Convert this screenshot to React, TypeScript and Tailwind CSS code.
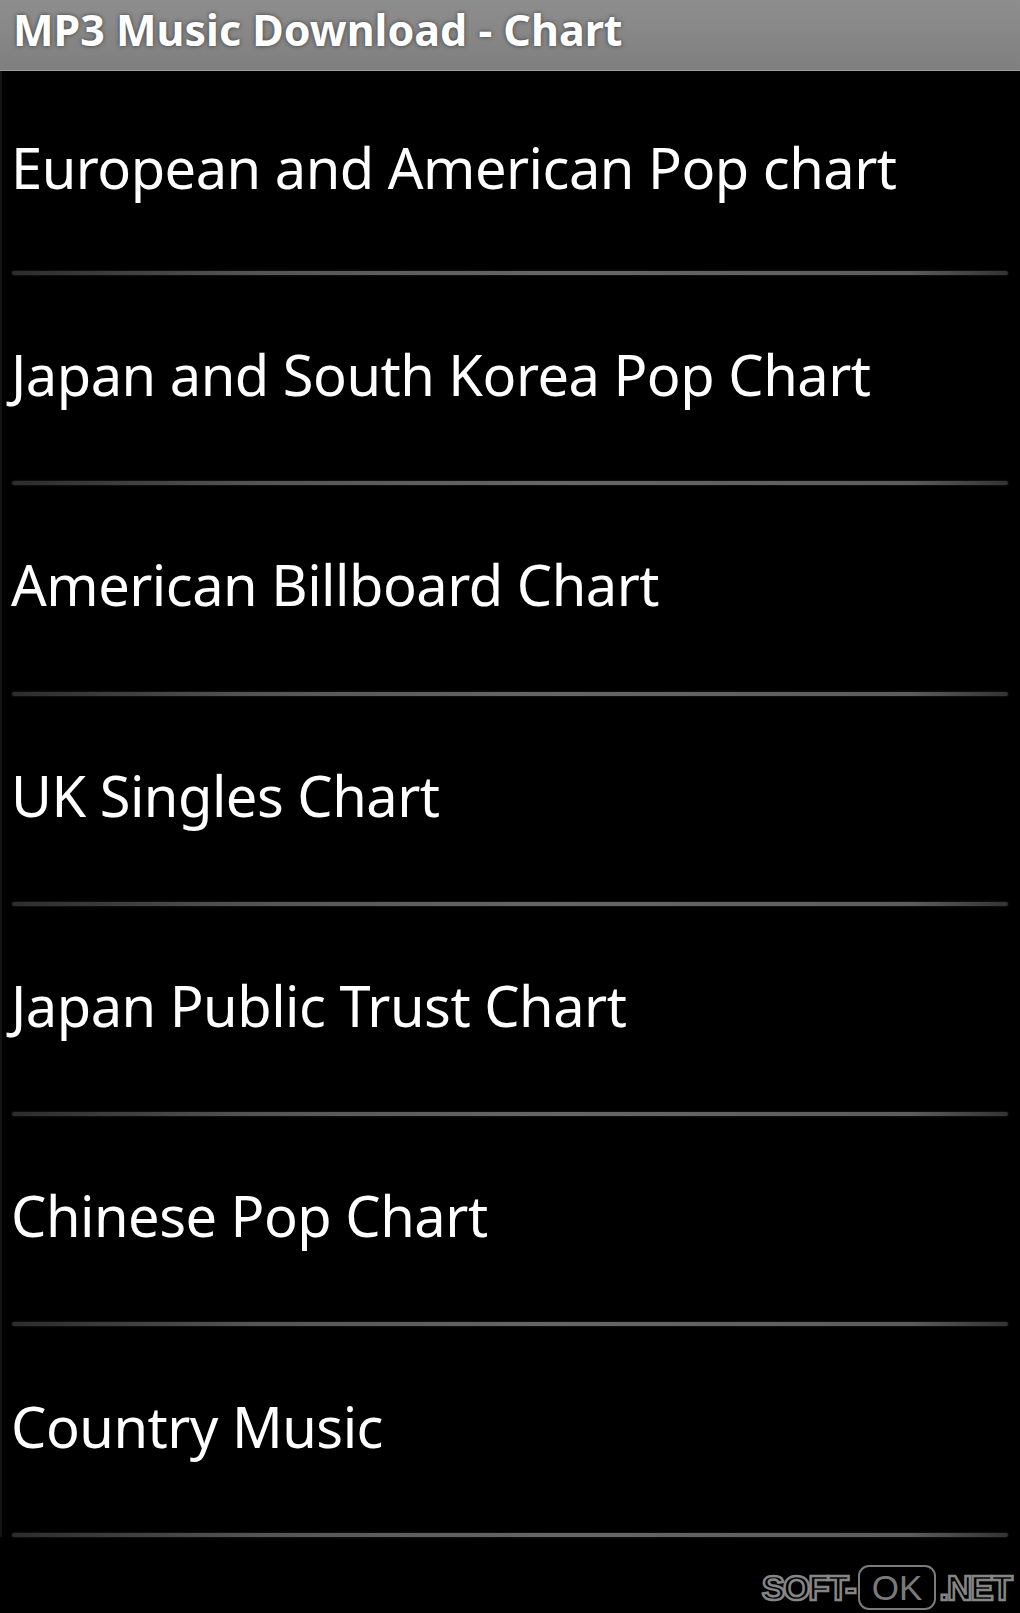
const charts = [
  "European and American Pop chart",
  "Japan and South Korea Pop Chart",
  "American Billboard Chart",
  "UK Singles Chart",
  "Japan Public Trust Chart",
  "Chinese Pop Chart",
  "Country Music",
];

function Divider() {
  return (
    <div className="h-[4px] ml-[10px] mr-[12px] rounded-full bg-[linear-gradient(to_right,#2c2c2c,#555555_25%,#666666_55%,#5c5c5c_90%,#333333)] shadow-[0_0_2px_rgba(90,90,90,0.6)]" />
  );
}

function Watermark() {
  return (
    <div className="absolute right-[9px] bottom-[3px] flex items-center font-['Liberation_Sans',Arial,sans-serif] text-[35px] font-bold leading-none tracking-[-2px]">
      <span className="text-black [-webkit-text-stroke:2.5px_#858585]">SOFT-</span>
      <span className="mx-[3px] px-[12px] h-[45px] flex items-center rounded-[11px] border-2 border-[#7a7a7a] font-normal text-[#7a7a7a] tracking-normal">
        OK
      </span>
      <span className="text-black [-webkit-text-stroke:2.5px_#858585]">.NET</span>
    </div>
  );
}

export default function App() {
  return (
    <div className="relative w-[1020px] h-[1613px] bg-black overflow-hidden font-['Noto_Sans','Open_Sans',sans-serif]">
      <header className="h-[71px] bg-gradient-to-b from-[#8e8e8e] to-[#7f7f7f] border-b border-[#9c9c9c] pl-[13px] pt-[8px]">
        <h1 className="text-[43px] font-bold leading-none text-white [text-shadow:0_0_4px_rgba(0,0,0,0.55)]">
          MP3 Music Download - Chart
        </h1>
      </header>
      <ul className="border-l-2 border-[#141414]">
        {charts.map((name, idx) => (
          <li key={name}>
            <div
              className={`flex items-center pl-[9px] pb-[8px] ${idx === 0 ? "h-[200px]" : "h-[206.3px]"}`}
            >
              <span className="text-[56px] leading-none tracking-[-0.5px] text-white">{name}</span>
            </div>
            <Divider />
          </li>
        ))}
      </ul>
      <Watermark />
    </div>
  );
}
